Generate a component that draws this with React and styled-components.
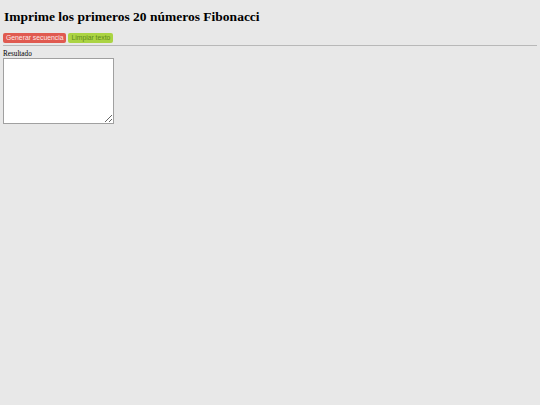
import React from 'react';
import styled, { createGlobalStyle } from 'styled-components';

const GlobalStyle = createGlobalStyle`
  html, body {
    margin: 0;
    background-color: #e8e8e8;
  }
  body {
    padding: 4px 3px;
    font-family: "Liberation Serif", "Times New Roman", serif;
    color: #000;
  }
`;

const Title = styled.h1`
  font-size: 13.5px;
  font-weight: bold;
  margin: 5px 1px 8px;
  line-height: 16px;
`;

const Toolbar = styled.div`
  display: flex;
  gap: 2px;
`;

const Button = styled.button`
  font-family: "Liberation Sans", Arial, sans-serif;
  font-size: 6.8px;
  line-height: 8px;
  padding: 1px 3px;
  height: 10px;
  border: none;
  border-radius: 2px;
  background-color: ${(p) => (p.$variant === 'danger' ? '#e05a50' : '#abd443')};
  color: ${(p) => (p.$variant === 'danger' ? '#fde8e6' : '#5f8a1c')};
  cursor: pointer;
`;

const Divider = styled.hr`
  margin: 2px 0 4px;
  border: none;
  border-top: 1px solid #b8b8b8;
  height: 0;
`;

const Label = styled.div`
  font-size: 7.2px;
  line-height: 8px;
`;

const Output = styled.textarea`
  display: block;
  box-sizing: border-box;
  width: 111px;
  height: 66px;
  margin: 0;
  border: 1px solid #a0a0a0;
  background: #fff;
  resize: both;
`;

export default function App() {
  return (
    <>
      <GlobalStyle />
      <Title>Imprime los primeros 20 números Fibonacci</Title>
      <Toolbar>
        <Button $variant="danger">Generar secuencia</Button>
        <Button $variant="ok">Limpiar texto</Button>
      </Toolbar>
      <Divider />
      <Label>Resultado</Label>
      <Output />
    </>
  );
}
